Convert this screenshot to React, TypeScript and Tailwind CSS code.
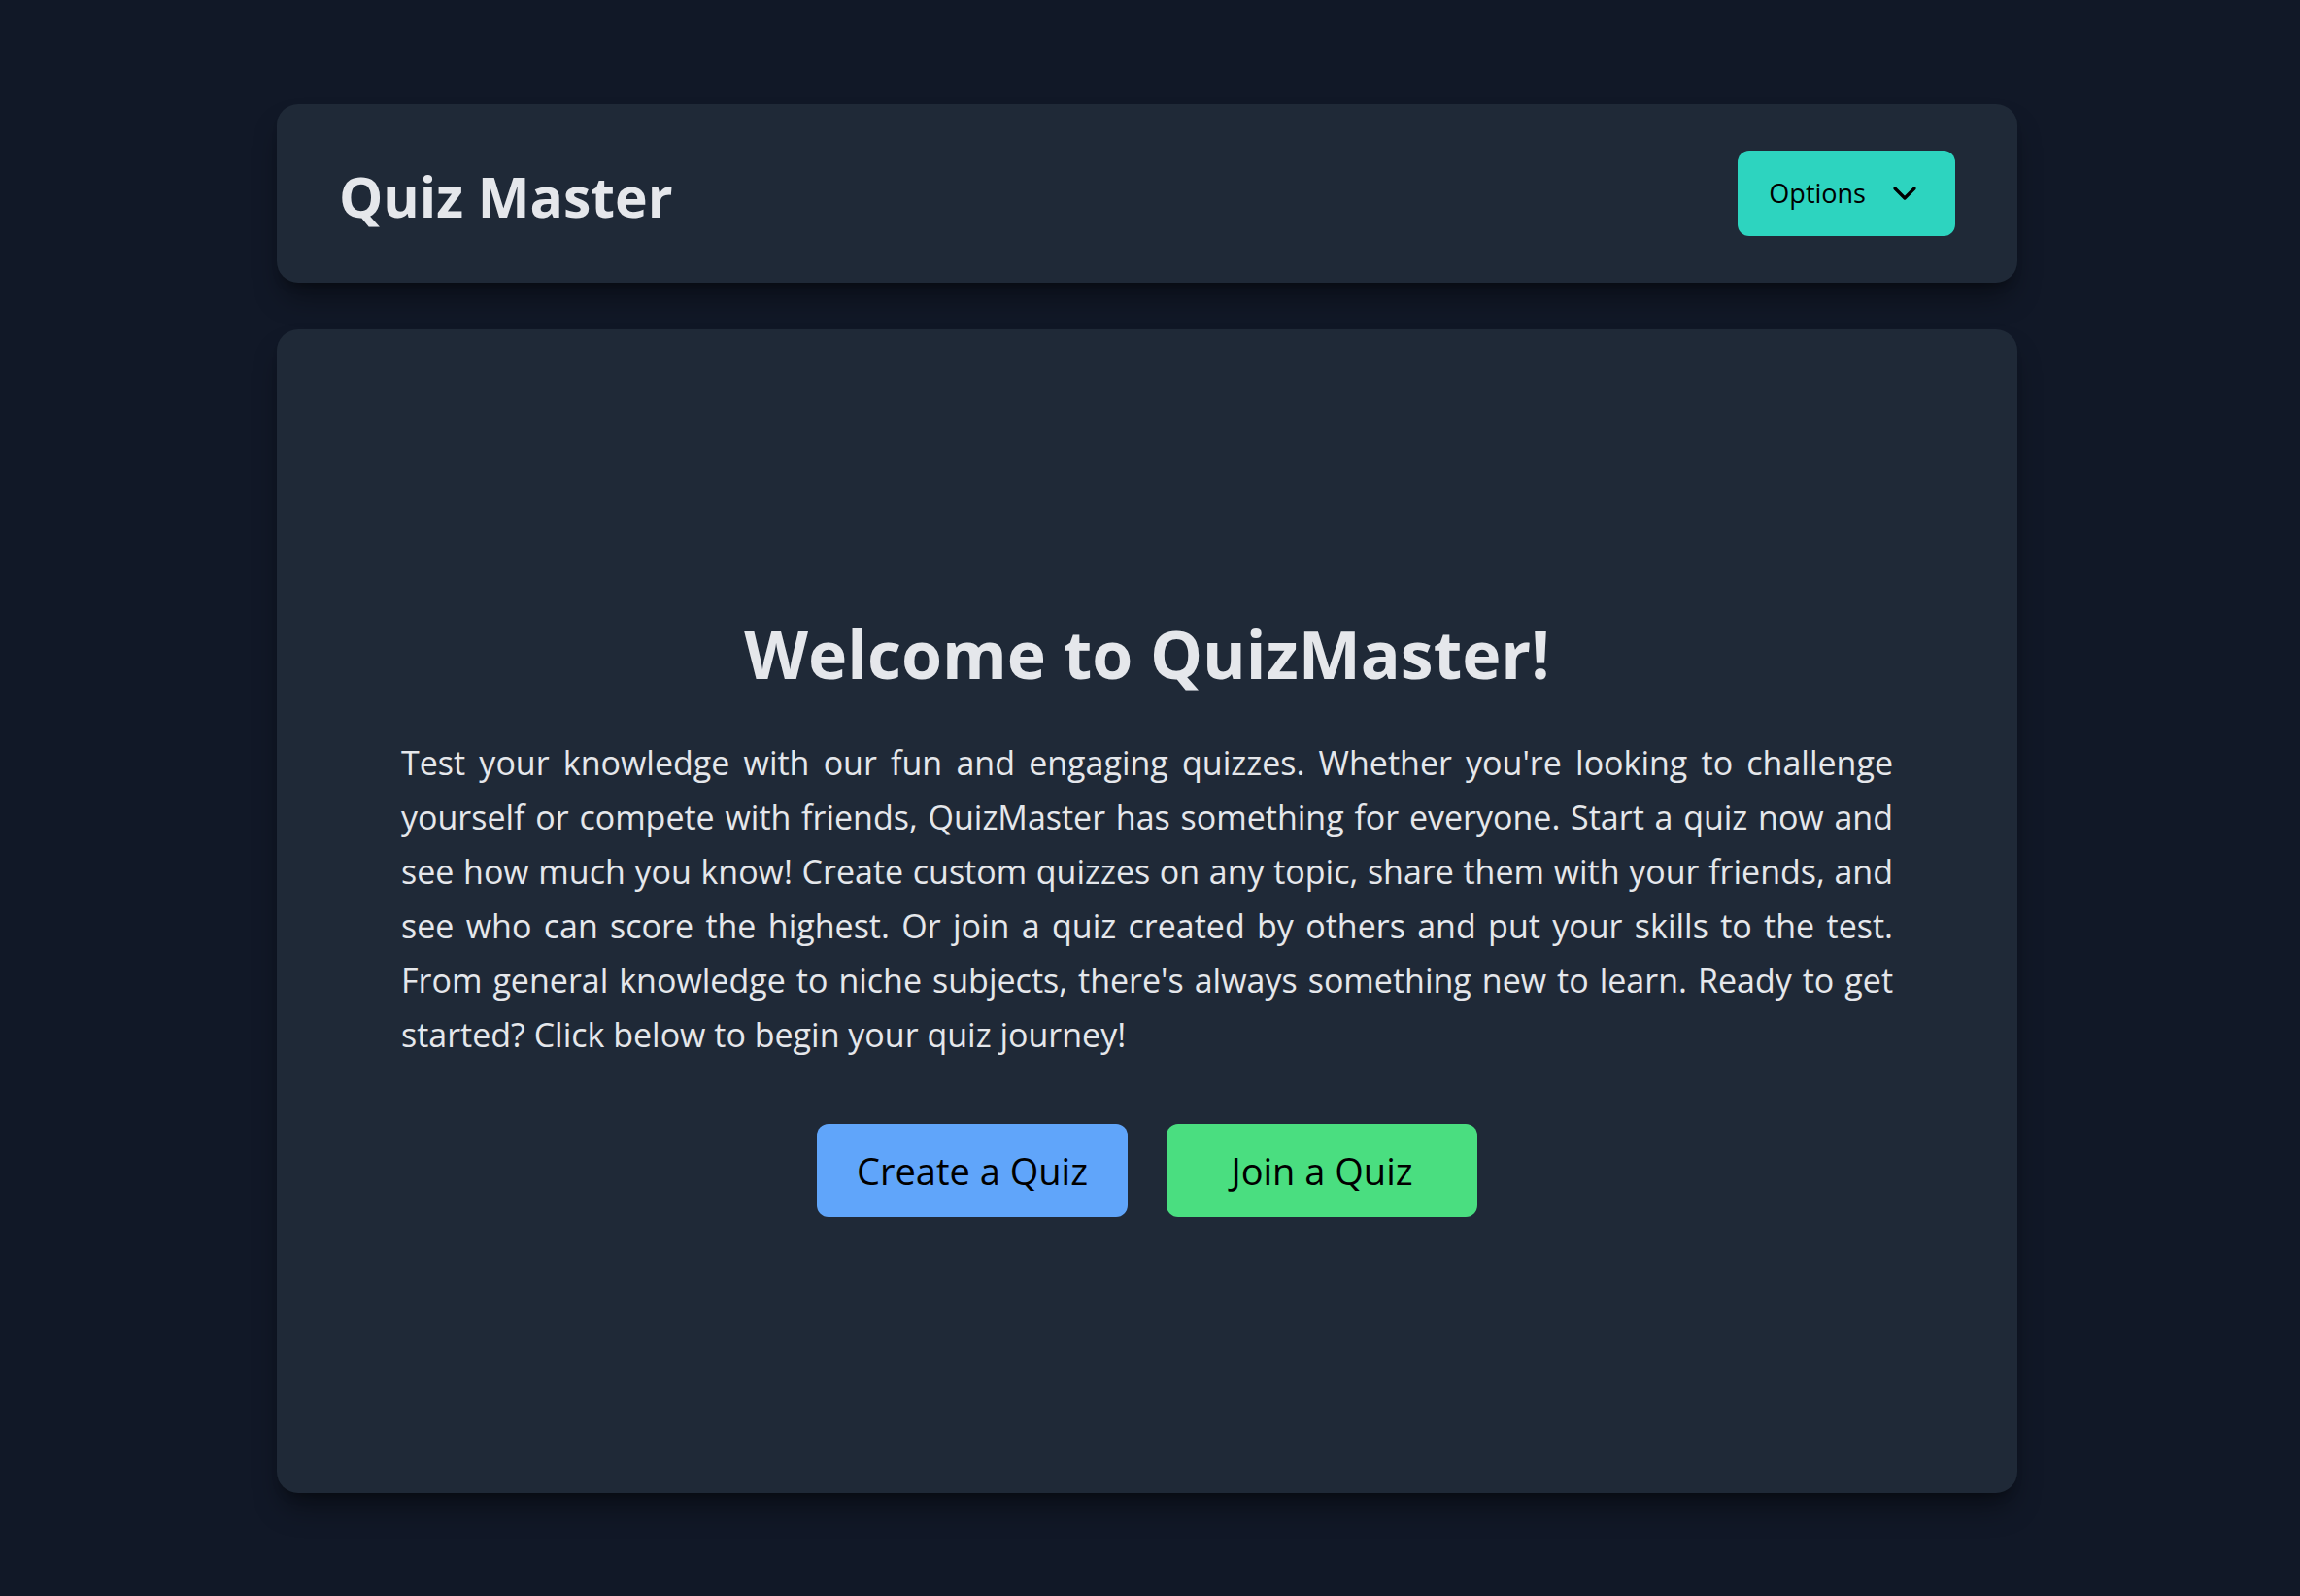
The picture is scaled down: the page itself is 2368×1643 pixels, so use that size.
import React from 'react';
import { ChevronDown } from 'lucide-react';

// the intro is split the way it breaks in the design so the justified block keeps its shape
const introLines = [
    "Test your knowledge with our fun and engaging quizzes. Whether you're looking to challenge",
    'yourself or compete with friends, QuizMaster has something for everyone. Start a quiz now and',
    'see how much you know! Create custom quizzes on any topic, share them with your friends, and',
    'see who can score the highest. Or join a quiz created by others and put your skills to the test.',
    "From general knowledge to niche subjects, there's always something new to learn. Ready to get",
    'started? Click below to begin your quiz journey!',
];

const Header: React.FC = () => {
    return (
        <header className="flex items-center justify-between rounded-[22px] bg-[#1f2937] px-[64px] py-[48px] shadow-[0_20px_30px_-6px_rgba(0,0,0,0.4),0_8px_12px_-8px_rgba(0,0,0,0.4)]">
            <h1 className="pt-[6px] text-[57px] leading-[72px] font-bold text-[#e5e7eb]">Quiz Master</h1>
            <button
                type="button"
                className="flex items-center rounded-[12px] bg-[#2dd4bf] pl-[32px] pr-[32px] py-[24px] text-[27px] leading-[40px] text-black"
            >
                Options
                <ChevronDown size={40} strokeWidth={2} className="ml-[20px]" />
            </button>
        </header>
    );
};

const App: React.FC = () => {
    return (
        <div className="min-h-screen bg-[#111827] flex flex-col items-center justify-center pr-[6px] font-['Open_Sans',sans-serif]">
            <div className="flex w-[1792px] flex-col gap-[48px]">
                <Header />

                <main className="flex h-[1198px] flex-col items-center justify-center rounded-[22px] bg-[#1f2937] px-[128px] pt-[6px] shadow-[0_20px_30px_-6px_rgba(0,0,0,0.4),0_8px_12px_-8px_rgba(0,0,0,0.4)]">
                    <h2 className="mt-[4px] mb-[44px] text-[68px] leading-[80px] font-bold text-[#e5e7eb]">
                        Welcome to QuizMaster!
                    </h2>
                    <p className="w-full text-justify text-[34px] leading-[56px] text-[#e5e7eb]">
                        {introLines.map((line, i) => (
                            <span
                                key={i}
                                className={
                                    i < introLines.length - 1
                                        ? 'block whitespace-nowrap [text-align-last:justify]'
                                        : 'block whitespace-nowrap'
                                }
                            >
                                {line}
                            </span>
                        ))}
                    </p>

                    <div className="mt-[64px] flex gap-[40px]">
                        <button
                            type="button"
                            className="w-[320px] rounded-[12px] bg-[#60a5fa] py-[20px] text-[38px] leading-[56px] text-black"
                        >
                            Create a Quiz
                        </button>
                        <button
                            type="button"
                            className="w-[320px] rounded-[12px] bg-[#4ade80] py-[20px] text-[38px] leading-[56px] text-black"
                        >
                            Join a Quiz
                        </button>
                    </div>
                </main>
            </div>
        </div>
    );
};

export default App;
